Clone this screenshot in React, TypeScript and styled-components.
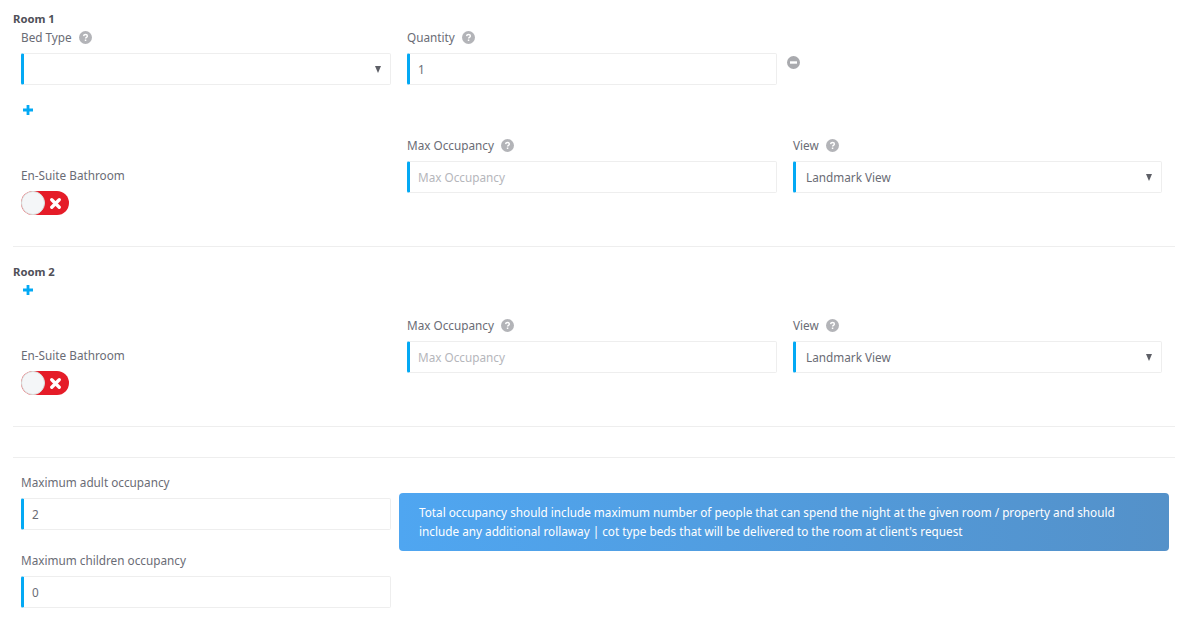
import React from 'react';
import styled, { createGlobalStyle } from 'styled-components';

const Global = createGlobalStyle`
  html, body { margin: 0; padding: 0; background: #fff; }
  body { font-family: "Noto Sans", "Open Sans", sans-serif; font-size: 11.75px; color: #6a6c75; overflow: hidden; height: 620px; }
  * { box-sizing: border-box; }
`;
const Page = styled.div`
  width: 1177px; height: 620px; padding: 0 2px 0 13px; overflow: hidden;
`;
const RoomSection = styled.section<{ $top: number; $height: number }>`
  padding-top: ${p => p.$top}px; height: ${p => p.$height}px; border-bottom: 1px solid #eeeeee;
`;
const RoomTitle = styled.div<{ $gap?: number }>`
  font-weight: 700; font-size: 11.25px; line-height: 14px; color: #4f5058; height: 14px; margin-bottom: ${p => p.$gap ?? 0}px;
`;
const Row = styled.div`
  display: grid; grid-template-columns: 386px 386px 385px;
`;
const Field = styled.div`
  padding: 0 8px; display: flex; flex-direction: column;
`;
const Label = styled.label`
  display: flex; align-items: center; gap: 7px; height: 16px; margin-bottom: 8px; line-height: 16px; color: #6a6c75;
`;
const InputBox = styled.div<{ $placeholder?: boolean }>`
  height: 32px; width: 100%; display: flex; align-items: center; justify-content: space-between;
  border: 1px solid #eeeeee; border-left: 3px solid #03a9f4; border-radius: 2px; padding: 0 9px 0 8px;
  background: #fff; color: ${p => p.$placeholder ? '#b5b6bb' : '#6a6c75'};
`;
const SelectBox = styled(InputBox)`
  padding-left: 10px;
`;
const Caret = styled.span`
  width: 0; height: 0; border-left: 3.5px solid transparent; border-right: 3.5px solid transparent; border-top: 7px solid #5d5f66;
`;
const QuantityCell = styled.div`
  display: flex; align-items: flex-start;
`;
const QuantityField = styled(Field)`
  flex: 0 0 386px;
`;
const RemoveIcon = styled.svg`
  width: 13px; height: 13px; margin-top: 27px; margin-left: 2px; flex: none;
`;
const AddBar = styled.div<{ $top: number }>`
  padding: ${p => p.$top}px 0 0 10px; display: flex;
`;
const RowGap = styled.div<{ $height: number }>`
  height: ${p => p.$height}px;
`;
const Toggle = styled.div`
  width: 48px; height: 24px; border-radius: 12px; background: #e51c28; position: relative; margin-top: 8px;
`;
const Knob = styled.span`
  position: absolute; left: 0; top: 0; width: 24px; height: 24px; border-radius: 50%; background: #f4f6f8; border: 1px solid #d8e0dd;
`;
const ToggleX = styled.svg`
  position: absolute; left: 29px; top: 7px; width: 11px; height: 11px;
`;
const EnSuite = styled.div`
  padding: 30px 8px 0; line-height: 16px;
`;
const Spacer = styled.div`
  height: 31px; border-bottom: 1px solid #eeeeee;
`;
const Bottom = styled.div`
  display: grid; grid-template-columns: 386px 770px; padding-top: 16px;
`;
const LeftStack = styled.div`
  display: flex; flex-direction: column; gap: 22px;
`;
const AlertWrap = styled.div`
  padding-top: 19px;
`;
const Alert = styled.div`
  height: 58px; border-radius: 4px; background: linear-gradient(90deg, #4fa6f1 0%, #5491c9 100%); color: #fff;
  padding: 10px 20px; line-height: 19px;
`;

const Help = () => (
  <svg width="13" height="13" viewBox="0 0 13 13" aria-hidden="true">
    <circle cx="6.5" cy="6.5" r="6.5" fill="#b3b4b8" />
    <path d="M4.6 5.1c.1-1.1 1-1.6 1.9-1.6 1.1 0 1.9.6 1.9 1.5 0 1.4-1.8 1.3-1.8 2.6" fill="none" stroke="#fff" strokeWidth="1.4" />
    <rect x="5.8" y="8.5" width="1.5" height="1.5" fill="#fff" />
  </svg>
);
const Plus = () => (
  <svg width="10" height="10" viewBox="0 0 10 10" aria-hidden="true">
    <path d="M5 0v10M0 5h10" stroke="#03a9f4" strokeWidth="2.8" />
  </svg>
);
const Occupancy = () => (
  <Row>
    <EnSuite>
      En-Suite Bathroom
      <Toggle>
        <Knob />
        <ToggleX viewBox="0 0 10 10"><path d="M1.6 1.6l6.8 6.8M8.4 1.6l-6.8 6.8" stroke="#fff" strokeWidth="3" strokeLinecap="round" /></ToggleX>
      </Toggle>
    </EnSuite>
    <Field>
      <Label>Max Occupancy <Help /></Label>
      <InputBox $placeholder>Max Occupancy</InputBox>
    </Field>
    <Field>
      <Label>View <Help /></Label>
      <SelectBox>Landmark View<Caret /></SelectBox>
    </Field>
  </Row>
);

export default function App() {
  return (
    <Page>
      <Global />
      <RoomSection $top={12} $height={247}>
        <RoomTitle $gap={3}>Room 1</RoomTitle>
        <Row>
          <Field>
            <Label>Bed Type <Help /></Label>
            <SelectBox><span /><Caret /></SelectBox>
          </Field>
          <QuantityCell>
            <QuantityField>
              <Label>Quantity <Help /></Label>
              <InputBox>1</InputBox>
            </QuantityField>
            <RemoveIcon viewBox="0 0 13 13">
              <circle cx="6.5" cy="6.5" r="6.5" fill="#a9aaae" />
              <rect x="3" y="5.3" width="7" height="2.4" fill="#fff" />
            </RemoveIcon>
          </QuantityCell>
        </Row>
        <AddBar $top={20}><Plus /></AddBar>
        <RowGap $height={22} />
        <Occupancy />
      </RoomSection>
      <RoomSection $top={18} $height={180}>
        <RoomTitle>Room 2</RoomTitle>
        <AddBar $top={6}><Plus /></AddBar>
        <RowGap $height={22} />
        <Occupancy />
      </RoomSection>
      <Spacer />
      <Bottom>
        <LeftStack>
          <Field>
            <Label>Maximum adult occupancy</Label>
            <InputBox>2</InputBox>
          </Field>
          <Field>
            <Label>Maximum children occupancy</Label>
            <InputBox>0</InputBox>
          </Field>
        </LeftStack>
        <AlertWrap>
          <Alert>
            Total occupancy should include maximum number of people that can spend the night at the given room / property and should include any additional rollaway | cot type beds that will be delivered to the room at client's request
          </Alert>
        </AlertWrap>
      </Bottom>
    </Page>
  );
}
